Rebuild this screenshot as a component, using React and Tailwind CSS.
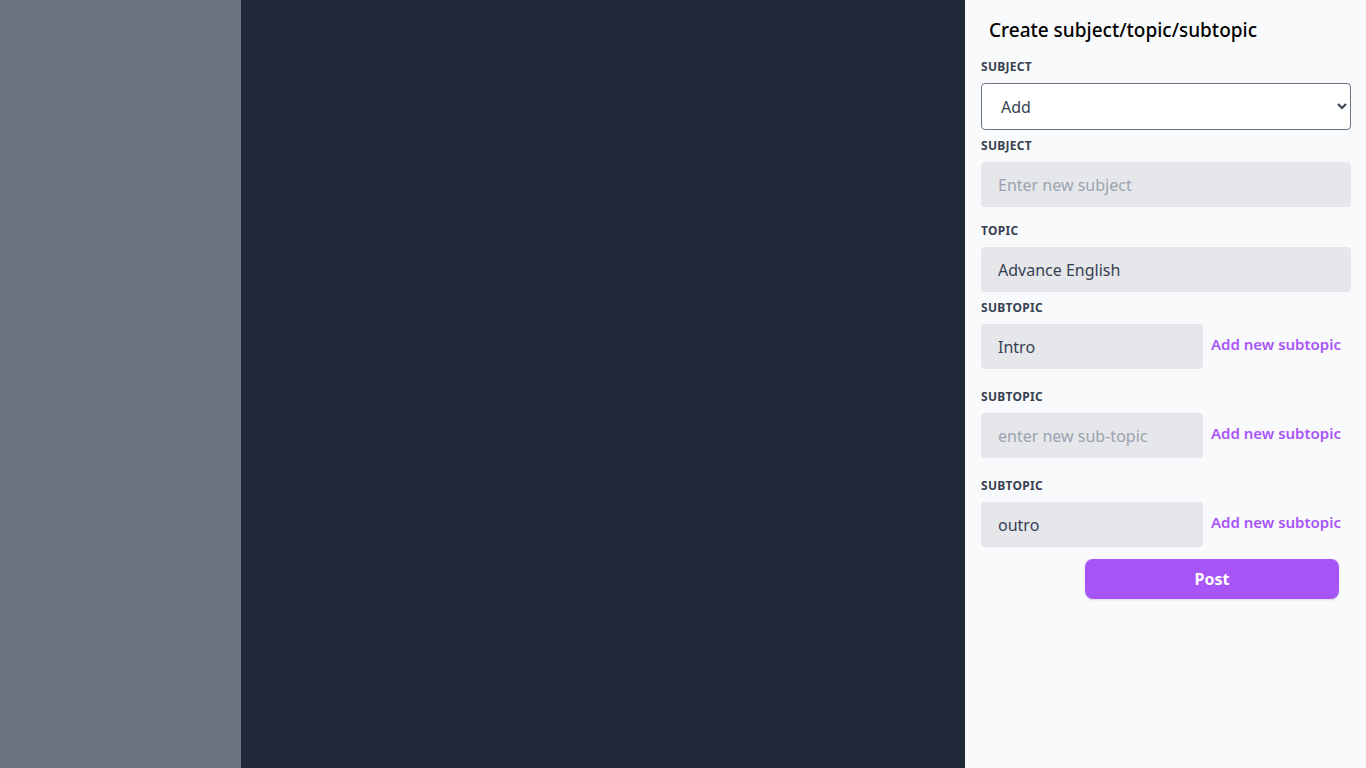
import { useState } from 'react';

const Label = ({ children, className = '' }) => (
  <label className={`block text-xs font-bold uppercase tracking-wide text-[#374151] leading-4 ${className}`}>
    {children}
  </label>
);

const inputCls =
  'block h-[45px] rounded bg-[#e5e7eb] pl-[17px] pr-4 text-base text-[#374151] placeholder-[#9ca3af] outline-none';

const SubtopicRow = ({ value, placeholder, className = '' }) => (
  <div className={`flex items-start ${className}`}>
    <input className={`${inputCls} w-[222px]`} defaultValue={value} placeholder={placeholder} />
    <button className="ml-2 mt-[9px] text-[15px] font-semibold text-[#a855f7]">Add new subtopic</button>
  </div>
);

export default function App() {
  const [subject, setSubject] = useState('Add');

  return (
    <div className="flex h-[768px] w-full overflow-hidden" style={{ fontFamily: '"Noto Sans", "Open Sans", sans-serif' }}>
      <div className="w-[241px] shrink-0 bg-[#6b7280]"></div>
      <div className="flex-1 bg-[#1f2937]"></div>
      <div className="w-[401px] shrink-0 bg-[#f9fafb] px-4">
        <h1 className="ml-2 mt-[17px] text-[19px] font-medium leading-[26px] text-black">Create subject/topic/subtopic</h1>

        <Label className="mt-[16px]">Subject</Label>
        <select
          value={subject}
          onChange={(e) => setSubject(e.target.value)}
          className="mt-[8px] block h-[47px] w-[370px] rounded border border-[#6b7280] bg-white pl-[15px] pr-2 text-base text-[#374151]"
        >
          <option>Add</option>
          <option>English</option>
        </select>

        <Label className="mt-[8px]">Subject</Label>
        <input className={`${inputCls} mt-[8px] w-[370px]`} placeholder="Enter new subject" />

        <Label className="mt-[16px]">Topic</Label>
        <input className={`${inputCls} mt-[8px] w-[370px]`} defaultValue="Advance English" />

        <Label className="mt-[8px]">Subtopic</Label>
        <SubtopicRow className="mt-[8px]" value="Intro" />

        <Label className="mt-[20px]">Subtopic</Label>
        <SubtopicRow className="mt-[8px]" placeholder="enter new sub-topic" />

        <Label className="mt-[20px]">Subtopic</Label>
        <SubtopicRow className="mt-[8px]" value="outro" />

        <button className="ml-[104px] mt-[12px] block h-[40px] w-[254px] rounded-lg bg-[#a855f7] text-base font-bold text-white shadow-sm">
          Post
        </button>
      </div>
    </div>
  );
}
